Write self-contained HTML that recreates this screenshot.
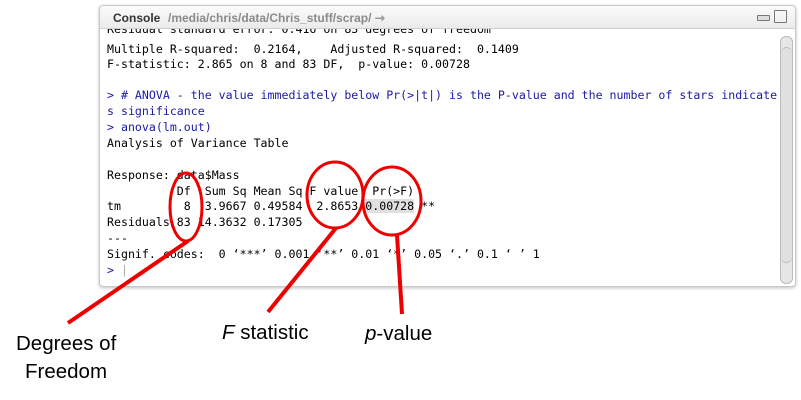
<!DOCTYPE html>
<html><head><meta charset="utf-8"><style>
body{margin:0;width:801px;height:400px;background:#fff;position:relative;overflow:hidden;font-family:"Liberation Sans",sans-serif}
.win{position:absolute;left:99px;top:5px;width:695px;height:280px;background:#fff;border:1px solid #c8c8c8;border-radius:4px;box-shadow:0 1px 3px rgba(0,0,0,.25)}
.hdr{position:absolute;left:0;top:0;right:0;height:22px;background:linear-gradient(#fbfbfb,#ebebeb);border-bottom:1px solid #cfcfcf;border-radius:4px 4px 0 0}
.hdr .t{position:absolute;left:13px;top:5px;font-size:12px;font-weight:bold;color:#333}
.hdr .p{position:absolute;left:68px;top:5px;font-size:12px;font-weight:bold;color:#8b8b8b}
.l{position:absolute;left:7px;font-family:"DejaVu Sans Mono","Liberation Mono",monospace;font-size:11.6px;white-space:pre;color:#000;line-height:14px}
.b{color:#1a1aa6}
.sb{position:absolute;right:2px;top:30px;width:11px;height:246px;border:1px solid #bbb;border-radius:6px;background:#e6e6e6}
.lab{position:absolute;font-size:20.5px;color:#000}
</style></head><body>
<div class="win">
<div class="hdr"><span class="t">Console</span><span class="p">/media/chris/data/Chris_stuff/scrap/ ⇾</span>
<div style="position:absolute;right:25px;top:9px;width:11px;height:4px;border:1px solid #777;border-radius:1px;background:#ddd"></div>
<div style="position:absolute;right:8px;top:4px;width:11px;height:11px;border:1px solid #777;border-radius:1px"></div></div>
<div class="sb"><div style="position:absolute;left:0;right:0;top:10px;bottom:20px;background:#e0e0e0;border-top:1px solid #bbb;border-bottom:1px solid #bbb;border-radius:6px"></div></div>
<div style="position:absolute;left:0;top:23px;right:20px;height:7px;overflow:hidden"><div class="l" style="top:-7px">Residual standard error: 0.416 on 83 degrees of freedom</div></div>
<div class="l" style="top:36px">Multiple R-squared:  0.2164,    Adjusted R-squared:  0.1409</div>
<div class="l" style="top:51px">F-statistic: 2.865 on 8 and 83 DF,  p-value: 0.00728</div>
<div class="l b" style="top:82px">&gt; # ANOVA - the value immediately below Pr(&gt;|t|) is the P-value and the number of stars indicate</div>
<div class="l b" style="top:98px">s significance</div>
<div class="l b" style="top:114px">&gt; anova(lm.out)</div>
<div class="l" style="top:130px">Analysis of Variance Table</div>
<div class="l" style="top:162px">Response: data$Mass</div>
<div class="l" style="top:178px">          Df  Sum Sq Mean Sq F value  Pr(&gt;F)</div>
<div class="l" style="top:193px">tm         8  3.9667 0.49584  2.8653 <span style="background:#e0e0e0">0.00728</span> **</div>
<div class="l" style="top:209px">Residuals 83 14.3632 0.17305</div>
<div class="l" style="top:225px">---</div>
<div class="l" style="top:241px">Signif. codes:  0 ‘***’ 0.001 ‘**’ 0.01 ‘*’ 0.05 ‘.’ 0.1 ‘ ’ 1</div>
<div class="l b" style="top:257px">&gt; <span style="color:#aaa">|</span></div>
</div>
<svg width="801" height="400" style="position:absolute;left:0;top:0">
<g fill="none" stroke="#e00" stroke-width="3">
<ellipse cx="186" cy="207" rx="16" ry="34"/>
<ellipse cx="335" cy="195" rx="28" ry="33"/>
<ellipse cx="392" cy="201" rx="29" ry="34"/>
<line x1="188" y1="241" x2="68" y2="323" stroke-width="4"/>
<line x1="336" y1="228" x2="268" y2="312" stroke-width="4"/>
<line x1="397" y1="235" x2="402" y2="314" stroke-width="4"/>
</g></svg>
<div class="lab" style="left:16px;top:332px">Degrees of</div>
<div class="lab" style="left:25px;top:360px">Freedom</div>
<div class="lab" style="left:222px;top:321px"><i>F</i> statistic</div>
<div class="lab" style="left:365px;top:322px"><i>p</i>-value</div>
</body></html>
